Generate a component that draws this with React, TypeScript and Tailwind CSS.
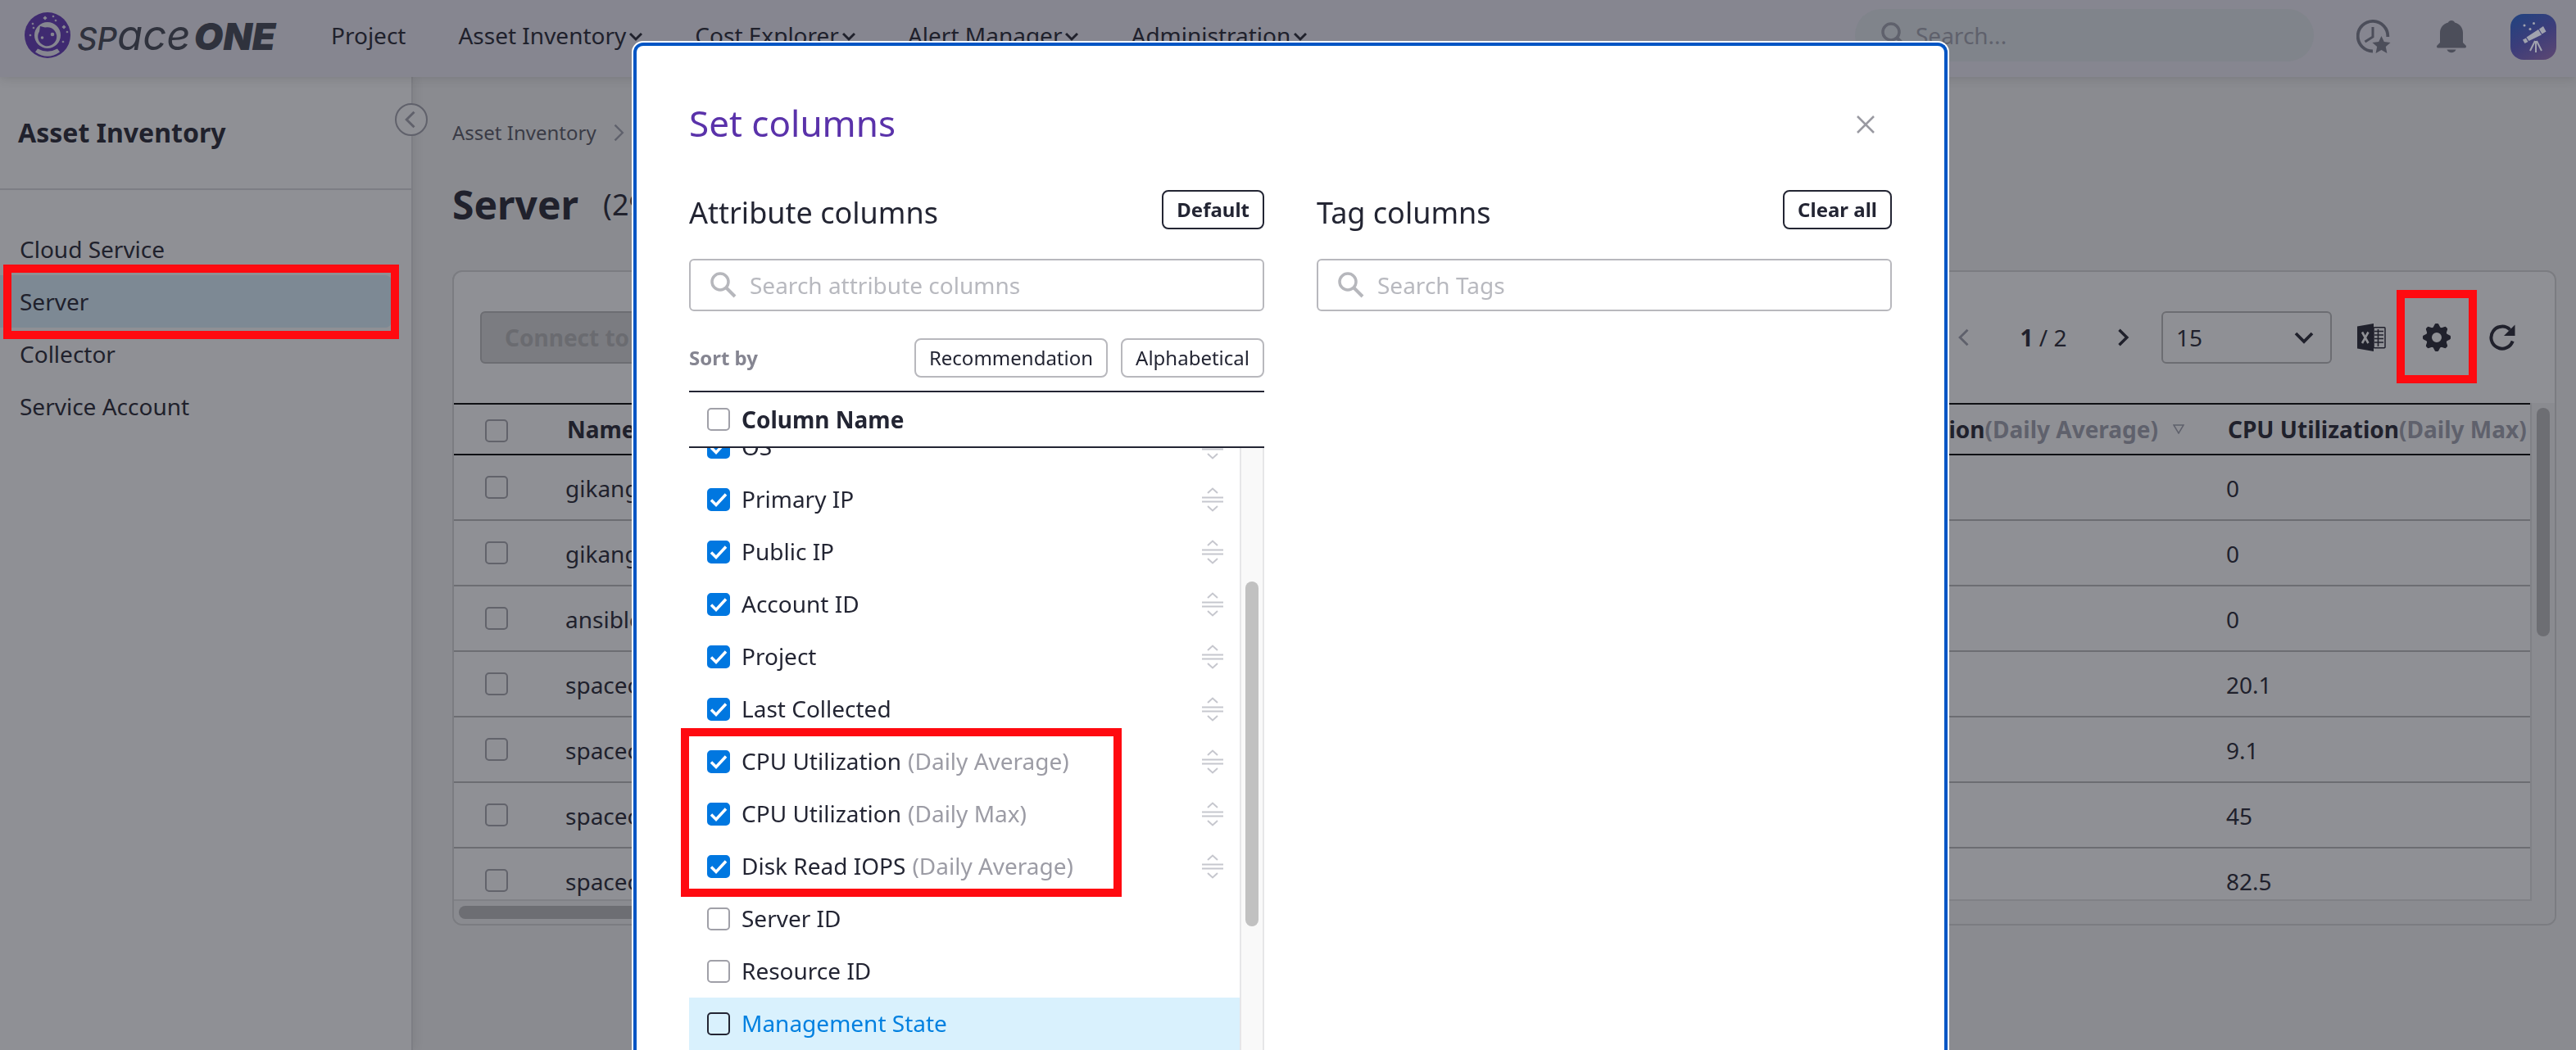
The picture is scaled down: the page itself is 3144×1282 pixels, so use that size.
import React from 'react';

type ColumnItem = { label: string; note?: string; checked?: boolean; hovered?: boolean };

const NAV = [
  { label: 'Project', menu: false },
  { label: 'Asset Inventory', menu: true },
  { label: 'Cost Explorer', menu: true },
  { label: 'Alert Manager', menu: true },
  { label: 'Administration', menu: true },
];

const SIDE = ['Cloud Service', 'Server', 'Collector', 'Service Account'];

const ROWS = [
  { name: 'gikang', max: '0' },
  { name: 'gikang', max: '0' },
  { name: 'ansible', max: '0' },
  { name: 'spaceone', max: '20.1' },
  { name: 'spaceone', max: '9.1' },
  { name: 'spaceone', max: '45' },
  { name: 'spaceone', max: '82.5' },
];

const COLUMNS: ColumnItem[] = [
  { label: 'OS', checked: true },
  { label: 'Primary IP', checked: true },
  { label: 'Public IP', checked: true },
  { label: 'Account ID', checked: true },
  { label: 'Project', checked: true },
  { label: 'Last Collected', checked: true },
  { label: 'CPU Utilization', note: '(Daily Average)', checked: true },
  { label: 'CPU Utilization', note: '(Daily Max)', checked: true },
  { label: 'Disk Read IOPS', note: '(Daily Average)', checked: true },
  { label: 'Server ID' },
  { label: 'Resource ID' },
  { label: 'Management State', hovered: true },
];

const STARS = [
  [25, 7, 2], [38, 10, 1], [10, 14, 1], [48, 18, 2], [7, 28, 1], [52, 24, 1], [47, 36, 1], [35, 5, 1], [11, 19, 1],
];

function Logo() {
  return (
    <a href="#home" aria-label="spaceONE" className="flex items-center">
      <svg width="56" height="56" viewBox="0 0 56 56" aria-hidden="true">
        <circle cx="28" cy="28" r="28" fill="#3f2a70" />
        <circle cx="28" cy="28" r="16" fill="#868690" />
        <path d="M19 17 l6 1.5 a11.5 11.5 0 1 1 -7 5 z" fill="#3f2a70" />
        <circle cx="21.5" cy="31" r="1.8" fill="#868690" />
        <circle cx="34" cy="27" r="2.3" fill="#868690" />
        <path d="M13 48.500 L16 44.500 Q28 51 40 44.500 L43 48.500 Q28 59 13 48.500 Z" fill="#868690" />
        {STARS.map(([x, y, r], i) => (
          <path key={i} d={`M${x} ${y - r - 0.6} L${x + r + 0.6} ${y} L${x} ${y + r + 0.6} L${x - r - 0.6} ${y} Z`} fill="#868690" />
        ))}
      </svg>
      <span className="ml-2 flex h-14 items-baseline font-['Inter',sans-serif] leading-[56px] text-[#2f323d] italic">
        <span className="text-[38px] font-medium">SP</span>
        <span className="text-[51px]">ace</span>
        <span className="ml-1 text-[46px] font-black">ONE</span>
      </span>
    </a>
  );
}

function SearchIcon({ className }: { className: string }) {
  return (
    <svg className={className} viewBox="0 0 32 32" fill="none" stroke="currentColor" aria-hidden="true">
      <circle cx="12" cy="12" r="10" strokeWidth="3.500" />
      <path d="M19.500 19.500 L30 30" strokeWidth="4" />
    </svg>
  );
}

function Chevron({ dir, className }: { dir: 'left' | 'right' | 'down'; className: string }) {
  const d = dir === 'left' ? 'M15 4 L7 12 L15 20' : dir === 'right' ? 'M9 4 L17 12 L9 20' : 'M4 8 L12 16 L20 8';
  return (
    <svg className={className} viewBox="0 0 24 24" fill="none" stroke="currentColor" aria-hidden="true">
      <path d={d} />
    </svg>
  );
}

function ClockStarIcon() {
  return (
    <svg width="42" height="42" viewBox="0 0 42 42" fill="none" aria-hidden="true">
      <path d="M20 38.500 A18.300 18.300 0 1 1 38.300 21" stroke="#4c4e5a" strokeWidth="3.800" />
      <path d="M20 9 V21 L10.500 27" stroke="#4c4e5a" strokeWidth="3" />
      <path d="M30.500 20 l3.300 7 7.700 .9 -5.700 5.200 1.600 7.900 -6.900 -3.900 -6.900 3.900 1.600 -7.900 -5.700 -5.200 7.700 -.9z" fill="#4c4e5a" />
    </svg>
  );
}

function BellIcon() {
  return (
    <svg width="36" height="40" viewBox="0 0 36 40" fill="#4c4e5a" aria-hidden="true">
      <path d="M18 0 C20 0 21.500 1 22 2.500 C28 4 32 9 32 15 V27 L35.500 30.500 C36.500 32 36 33.500 34 33.500 H2 C0 33.500 -.5 32 .5 30.500 L4 27 V15 C4 9 8 4 14 2.500 C14.500 1 16 0 18 0 Z" />
      <path d="M12.500 35.500 H23.500 C22.500 38 20.500 39.300 18 39.300 C15.500 39.300 13.500 38 12.500 35.500 Z" />
    </svg>
  );
}

function Avatar() {
  return (
    <svg width="56" height="56" viewBox="0 0 56 56" aria-hidden="true">
      <defs>
        <linearGradient id="avatar-bg" x1="0.2" y1="0" x2="0.8" y2="1">
          <stop offset="0" stopColor="#24427f" />
          <stop offset="0.5" stopColor="#3c3d7a" />
          <stop offset="1" stopColor="#594673" />
        </linearGradient>
      </defs>
      <rect width="56" height="56" rx="16" fill="url(#avatar-bg)" />
      <g fill="#a0a2ae">
        <path d="M15 31.500 L19 29.500 L21.500 34 L17.500 36 Z" />
        <path d="M19.500 28.500 L34 19 L38 25.500 L22.500 33 Z" />
        <path d="M35 18.500 L40 15 L43.500 21.500 L38.500 24.500 Z" />
        <circle cx="17" cy="14" r="1.500" />
        <circle cx="28.500" cy="11.500" r="1.500" />
        <circle cx="24" cy="18.500" r="1.500" />
      </g>
      <path d="M30 33 L24 45 M31 33 V47 M32 33 L38 45" stroke="#a0a2ae" strokeWidth="2" />
    </svg>
  );
}

function ExcelIcon() {
  return (
    <svg width="35" height="34" viewBox="0 0 35 34" aria-hidden="true">
      <path d="M0 3.500 L20 0 V34 L0 30.500 Z" fill="#20212c" />
      <rect x="20" y="4.750" width="14" height="25" rx="1" fill="none" stroke="#20212c" strokeWidth="1.500" />
      <path d="M21 9.500 H32 M21 14 H32 M21 18.500 H32 M21 23 H32 M25.500 7 V28" stroke="#20212c" strokeWidth="1.600" />
      <path d="M6 10.500 L13.500 24 M13.500 10.500 L6 24" stroke="#8f9095" strokeWidth="2.600" />
    </svg>
  );
}

function GearIcon() {
  return (
    <svg width="34" height="34" viewBox="-17 -17 34 34" aria-hidden="true">
      <circle r="9.500" fill="none" stroke="#20212c" strokeWidth="7" />
      {[0, 45, 90, 135, 180, 225, 270, 315].map((a) => (
        <path key={a} d="M-5 -11 L-2.400 -16 Q-2 -17 -1 -17 H1 Q2 -17 2.400 -16 L5 -11 Z" transform={`rotate(${a})`} fill="#20212c" />
      ))}
    </svg>
  );
}

function RefreshIcon() {
  return (
    <svg width="32" height="32" viewBox="0 0 32 32" aria-hidden="true">
      <path d="M28.700 20.500 A13.500 13.500 0 1 1 25.500 6.600" fill="none" stroke="#20212c" strokeWidth="4" />
      <path d="M31.500 0.500 V14 H18 Z" fill="#20212c" />
    </svg>
  );
}

function DragIcon() {
  return (
    <svg width="26" height="30" viewBox="0 0 26 30" fill="none" stroke="#c6c7ce" strokeWidth="2" aria-hidden="true">
      <path d="M7 7 L13 1.500 L19 7 M0 12.500 H26 M0 17.500 H26 M7 23 L13 28.500 L19 23" />
    </svg>
  );
}

function Check({ id, label, checked, tone }: { id?: string; label?: string; checked?: boolean; tone: string }) {
  return (
    <span className="relative block size-7 shrink-0">
      <input
        id={id}
        aria-label={label}
        type="checkbox"
        defaultChecked={checked}
        className={`block size-7 appearance-none rounded-[5px] border-2 checked:border-[#0077e0] checked:bg-[#0077e0] ${tone}`}
      />
      {checked && (
        <svg className="pointer-events-none absolute inset-0" viewBox="0 0 28 28" fill="none" stroke="#fff" strokeWidth="3.500" aria-hidden="true">
          <path d="M5 14.500 L11 20.500 L23 7.500" />
        </svg>
      )}
    </span>
  );
}

function Header() {
  return (
    <header className="relative z-10 flex h-[94px] items-center bg-[#868690] pr-6 pb-2 pl-[30px] shadow-[0_2px_12px_rgba(0,0,0,0.12)]">
      <div className="w-[374px] shrink-0">
        <Logo />
      </div>
      <nav className="flex items-center gap-16 text-[28px] text-[#20212c]">
        {NAV.map((n) => (
          <a key={n.label} href="#nav" className="flex items-center gap-1 whitespace-nowrap">
            {n.label}
            {n.menu && (
              <svg className="mt-1 h-3 w-4" viewBox="0 0 16 12" fill="none" stroke="currentColor" strokeWidth="3" aria-hidden="true">
                <path d="M1 2 L8 9 L15 2" />
              </svg>
            )}
          </a>
        ))}
      </nav>
      <div className="ml-auto flex items-center">
        <label className="mr-[52px] flex h-16 w-[560px] items-center rounded-full bg-[#80848b] pl-8 text-[#5f616c]">
          <SearchIcon className="size-8 shrink-0" />
          <input
            aria-label="Search"
            placeholder="Search..."
            className="ml-2.5 w-full bg-transparent text-[28px] outline-none placeholder:text-[#5f616c]"
          />
        </label>
        <button aria-label="Recent and favorites" className="mt-1 mr-[56px]">
          <ClockStarIcon />
        </button>
        <button aria-label="Notifications" className="mt-1 mr-[54px]">
          <BellIcon />
        </button>
        <button aria-label="Account" className="mt-1">
          <Avatar />
        </button>
      </div>
    </header>
  );
}

function Sidebar() {
  return (
    <aside className="relative w-[504px] shrink-0 border-r-2 border-[#7d7e84] bg-[#8f9095] text-[#20212c] shadow-[4px_0_10px_rgba(0,0,0,0.06)]">
      <h2 className="flex h-[138px] items-center border-b-2 border-[#7d7e84] pl-[22px] text-[32px] font-bold">Asset Inventory</h2>
      <button
        aria-label="Collapse sidebar"
        className="absolute top-8 -right-5 flex size-10 items-center justify-center rounded-full border-2 border-[#60616b] bg-[#8f9095] text-[#60616b]"
      >
        <Chevron dir="left" className="size-7 stroke-[2.5]" />
      </button>
      <ul className="pt-10 text-[28px]">
        {SIDE.map((s) => (
          <li key={s} className="relative">
            <a
              href="#side"
              className={
                s === 'Server'
                  ? 'mr-6 flex h-16 items-center rounded-r-lg bg-[#7d8994] pl-6'
                  : 'mr-6 flex h-16 items-center pl-6'
              }
            >
              {s}
            </a>
            {s === 'Server' && (
              <div className="pointer-events-none absolute -top-[13px] left-1 h-[91px] w-[483px] border-10 border-[#ff0a10]" />
            )}
          </li>
        ))}
      </ul>
    </aside>
  );
}

function Toolbar() {
  return (
    <div className="flex h-40 items-center pr-10 pl-8 text-[28px]">
      <button className="h-16 w-[340px] rounded-md border-2 border-[#6c6d72] bg-[#7b7c81] pl-7 text-left font-bold text-[#6a6b70]">
        Connect to
      </button>
      <div className="ml-auto flex items-center">
        <button aria-label="Previous page" className="flex w-10 justify-center text-[#5f616c]">
          <Chevron dir="left" className="size-7 stroke-[2.5]" />
        </button>
        <span className="w-[152px] text-center">
          <b>1</b> / 2
        </span>
        <button aria-label="Next page" className="flex w-10 justify-center">
          <Chevron dir="right" className="size-7 stroke-[3]" />
        </button>
        <div className="relative ml-7">
          <select aria-label="Page size" className="h-16 w-[208px] appearance-none rounded-md border-2 border-[#6c6d72] bg-transparent pl-4">
            <option>15</option>
          </select>
          <Chevron dir="down" className="pointer-events-none absolute top-[17px] right-[19px] size-[30px] stroke-[3]" />
        </div>
        <div className="ml-6 flex gap-8">
          <button aria-label="Export to Excel" className="flex size-12 items-center justify-center">
            <ExcelIcon />
          </button>
          <button aria-label="Settings" className="relative flex size-12 items-center justify-center">
            <GearIcon />
            <span className="pointer-events-none absolute -top-[34px] -left-[25px] h-[114px] w-[98px] border-10 border-[#ff0a10]" />
          </button>
          <button aria-label="Refresh" className="flex size-12 items-center justify-center">
            <RefreshIcon />
          </button>
        </div>
      </div>
    </div>
  );
}

function ServerTable() {
  return (
    <div className="flex">
      <div className="min-w-0 flex-1">
        <div className="h-[608px] overflow-hidden border-r-2 border-b-2 border-[#808186]">
          <table className="w-full table-fixed border-separate border-spacing-0 text-left text-[28px]">
            <colgroup>
              <col className="w-[120px]" />
              <col />
              <col className="w-[560px]" />
              <col className="w-[387px]" />
            </colgroup>
            <thead>
              <tr className="h-16 whitespace-nowrap">
                <th className="border-y-2 border-[#0f1014] p-0 pt-1 pl-[38px]">
                  <Check label="Select all servers" tone="border-[#62636b]" />
                </th>
                <th className="border-y-2 border-[#0f1014] p-0 pl-[18px] leading-10">Name</th>
                <th className="border-y-2 border-[#0f1014] p-0 leading-10">
                  <div className="flex items-center justify-end pr-[35px]">
                    CPU Utilization<span className="text-[#5f616c]">(Daily Average)</span>
                    <svg className="ml-[18px] h-3 w-3.5" viewBox="0 0 14 12" fill="none" stroke="#5f616c" strokeWidth="1.500" aria-hidden="true">
                      <path d="M1 1 H13 L7 11 Z" />
                    </svg>
                  </div>
                </th>
                <th className="border-y-2 border-[#0f1014] p-0 pl-[18px] leading-10">
                  CPU Utilization<span className="text-[#5f616c]">(Daily Max)</span>
                </th>
              </tr>
            </thead>
            <tbody>
              {ROWS.map((r, i) => (
                <tr key={i} className="h-20">
                  <td className="border-b-2 border-[#6c6d72] p-0 pl-[38px]">
                    <Check label={`Select ${r.name} ${i + 1}`} tone="border-[#62636b]" />
                  </td>
                  <td className="border-b-2 border-[#6c6d72] p-0 pt-0.5 pl-4">{r.name}</td>
                  <td className="border-b-2 border-[#6c6d72] p-0" />
                  <td className="border-b-2 border-[#6c6d72] p-0 pt-0.5 pl-4">{r.max}</td>
                </tr>
              ))}
            </tbody>
          </table>
        </div>
        <div className="h-7 bg-[#8a8b90] px-1.5 pt-1.5">
          <div className="h-4 w-[1200px] rounded-full bg-[#6d6e73]" />
        </div>
      </div>
      <div className="w-7 bg-[#8a8b90] px-1.5 pt-1.5">
        <div className="h-[279px] w-4 rounded-full bg-[#6d6e73]" />
      </div>
    </div>
  );
}

function ColumnRow({ item, id }: { item: ColumnItem; id: string }) {
  return (
    <li
      className={
        item.hovered
          ? 'flex h-16 items-center gap-3.5 bg-[#d9f1fd] pr-[18px] pl-[22px] text-[#0080e0]'
          : 'flex h-16 items-center gap-3.5 pr-5 pl-[22px]'
      }
    >
      <Check id={id} checked={item.checked} tone={item.hovered ? 'border-[#232533]' : 'border-[#a0a0a8]'} />
      <label htmlFor={id} className="flex flex-1 gap-2 pb-0.5">
        {item.label}
        {item.note && <span className="text-[#9c9ca5]">{item.note}</span>}
      </label>
      {item.checked && <DragIcon />}
    </li>
  );
}

function SearchField({ label }: { label: string }) {
  return (
    <label className="mt-7 flex h-16 items-center rounded-md border-2 border-[#b8b8bd] pl-6 text-[#b6b7bc]">
      <SearchIcon className="size-8 shrink-0" />
      <input aria-label={label} placeholder={label} className="ml-4 w-full text-[28px] outline-none placeholder:text-[#b8b9bf]" />
    </label>
  );
}

function SetColumnsDialog() {
  return (
    <div className="fixed inset-0 z-20 flex justify-center overflow-hidden pt-[52px] pl-[6px]">
      <section
        role="dialog"
        aria-label="Set columns"
        className="w-[1604px] rounded-t-xl border-4 border-b-0 border-[#0055c4] bg-white px-16 pt-16 text-[#232533] shadow-[0_0_0_2px_#fff]"
      >
        <div className="flex h-[60px] items-center justify-between">
          <h1 className="text-[44px] text-[#5a32aa]">Set columns</h1>
          <button aria-label="Close" className="mt-1 mr-3 flex size-10 items-center justify-center">
            <svg width="22" height="22" viewBox="0 0 22 22" fill="none" stroke="#9999a1" strokeWidth="2.500" aria-hidden="true">
              <path d="M1 1 L21 21 M21 1 L1 21" />
            </svg>
          </button>
        </div>
        <div className="mt-[52px] grid grid-cols-2 gap-16">
          <div>
            <div className="flex h-14 items-center justify-between">
              <h2 className="text-[36px]">Attribute columns</h2>
              <button className="h-12 self-start rounded-lg border-2 border-[#232533] px-4 text-2xl font-bold">Default</button>
            </div>
            <SearchField label="Search attribute columns" />
            <div className="mt-[33px] flex h-12 items-center text-2xl">
              <span className="flex-1 font-bold text-[#858591]">Sort by</span>
              <button className="h-12 rounded-lg border-2 border-[#b8b8bd] px-4">Recommendation</button>
              <button className="ml-4 h-12 rounded-lg border-2 border-[#b8b8bd] px-4">Alphabetical</button>
            </div>
            <div className="relative mt-4 text-[28px]">
              <div className="flex h-[70px] items-center gap-3.5 border-y-2 border-[#232533] pl-[22px] font-bold">
                <Check id="col-all" tone="border-[#a0a0a8]" />
                <label htmlFor="col-all">Column Name</label>
              </div>
              <div className="flex overflow-hidden">
                <ul className="-mt-[33px] flex-1">
                  {COLUMNS.map((c, i) => (
                    <ColumnRow key={i} id={`col-${i}`} item={c} />
                  ))}
                </ul>
                <div className="w-[30px] border-x-2 border-[#e6e6e8] bg-[#f9f9f9] px-[5px] pt-[163px]">
                  <div className="h-[421px] w-4 rounded-full bg-[#c1c1c1]" />
                </div>
              </div>
              <div className="pointer-events-none absolute top-[412px] -left-[10px] h-[206px] w-[538px] border-10 border-[#ff0a10]" />
            </div>
          </div>
          <div>
            <div className="flex h-14 items-center justify-between">
              <h2 className="text-[36px]">Tag columns</h2>
              <button className="h-12 self-start rounded-lg border-2 border-[#232533] px-4 text-2xl font-bold">Clear all</button>
            </div>
            <SearchField label="Search Tags" />
          </div>
        </div>
      </section>
    </div>
  );
}

export default function App() {
  return (
    <div className="flex min-h-screen flex-col bg-[#8a8b90] font-['Noto_Sans',sans-serif] text-[#20212c]">
      <Header />
      <div className="flex flex-1">
        <Sidebar />
        <main className="min-w-0 flex-1 pt-12 pr-6 pl-12">
          <div className="flex h-10 items-center gap-3 text-2xl text-[#3a3b46]">
            <a href="#inventory">Asset Inventory</a>
            <Chevron dir="right" className="size-7 stroke-[2] text-[#5f616c]" />
          </div>
          <div className="mt-9 flex h-16 items-center gap-[30px]">
            <h1 className="text-[48px] font-bold">Server</h1>
            <span className="text-[36px]">(29)</span>
          </div>
          <section className="mt-12 overflow-hidden rounded-xl border-2 border-[#7b7c81] bg-[#8f9095]">
            <Toolbar />
            <ServerTable />
          </section>
        </main>
      </div>
      <SetColumnsDialog />
    </div>
  );
}
